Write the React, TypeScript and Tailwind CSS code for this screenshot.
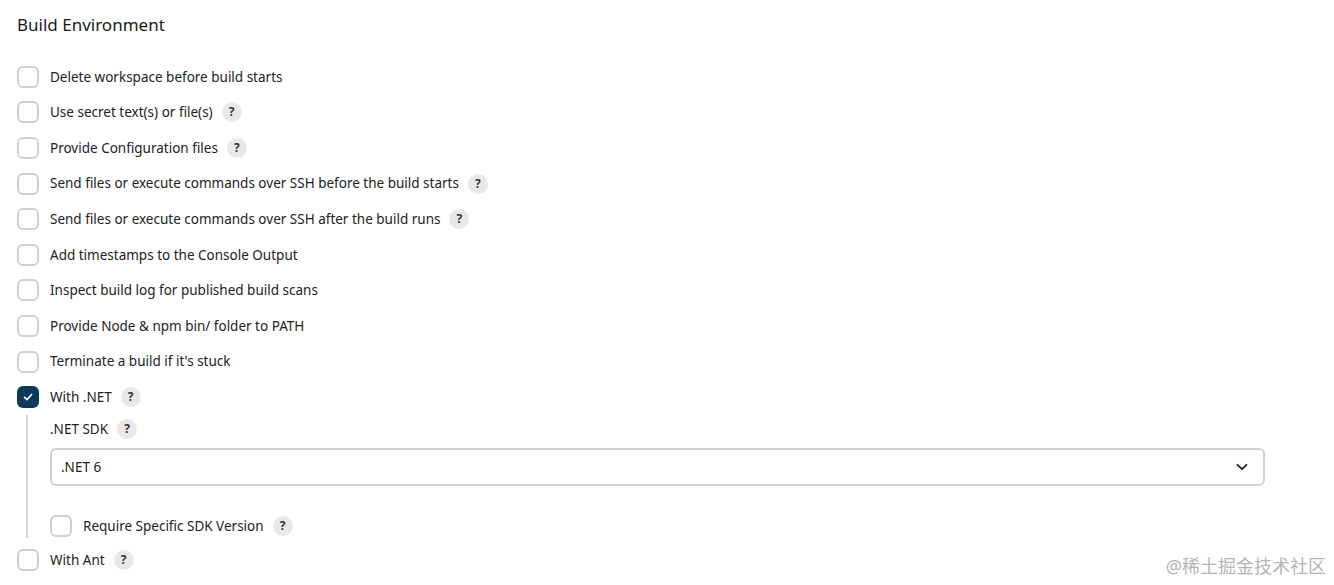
import React from "react";

const Help = () => (
  <span className="ml-[9px] inline-flex h-[20px] w-[20px] items-center justify-center rounded-full bg-[#e8e8e8] text-[12px] font-bold leading-none text-[#333]">
    ?
  </span>
);

const Box = ({ checked = false }: { checked?: boolean }) =>
  checked ? (
    <span className="flex h-[22px] w-[22px] shrink-0 items-center justify-center rounded-[6px] bg-[#0d3a5a]">
      <svg width="12" height="12" viewBox="0 0 12 12" fill="none">
        <path d="M2.5 6.3 L5 8.7 L9.6 3.4" stroke="white" strokeWidth="1.6" strokeLinecap="round" strokeLinejoin="round" />
      </svg>
    </span>
  ) : (
    <span className="h-[22px] w-[22px] shrink-0 rounded-[6px] border-2 border-[#d0d0d0] bg-white" />
  );

const Row = ({ label, help = false, checked = false }: { label: string; help?: boolean; checked?: boolean }) => (
  <div className="flex h-[35.6px] items-center">
    <Box checked={checked} />
    <span className="ml-[11px] text-[13.5px] text-[#222]">{label}</span>
    {help && <Help />}
  </div>
);

export default function App() {
  return (
    <div
      className="relative h-[585px] w-[1334px] overflow-hidden bg-white pl-[17px] text-[#222]"
      style={{ fontFamily: '"Segoe UI", "Noto Sans", "Noto Sans CJK SC", sans-serif' }}
    >
      <h2 className="pt-[13px] text-[17px] leading-[24px] text-[#1a1a1a]">Build Environment</h2>
      <div className="mt-[22px] flex flex-col">
        <Row label="Delete workspace before build starts" />
        <Row label="Use secret text(s) or file(s)" help />
        <Row label="Provide Configuration files" help />
        <Row label="Send files or execute commands over SSH before the build starts" help />
        <Row label="Send files or execute commands over SSH after the build runs" help />
        <Row label="Add timestamps to the Console Output" />
        <Row label="Inspect build log for published build scans" />
        <Row label="Provide Node & npm bin/ folder to PATH" />
        <Row label="Terminate a build if it's stuck" />
        <Row label="With .NET" help checked />
        <div className="ml-[9px] flex border-l-2 border-[#d4d4d4] pl-[22px]">
          <div className="flex w-[1215px] flex-col">
            <div className="flex h-[28px] items-center text-[13.5px]">
              .NET SDK
              <Help />
            </div>
            <div className="mt-[5px] flex h-[38px] items-center justify-between rounded-[6px] border-2 border-[#d0d0d0] pl-[9px] pr-[14px] text-[13.5px]">
              <span>.NET 6</span>
              <svg width="14" height="14" viewBox="0 0 14 14" fill="none">
                <path d="M2.5 4.8 L7 9.2 L11.5 4.8" stroke="#222" strokeWidth="1.8" strokeLinecap="round" strokeLinejoin="round" />
              </svg>
            </div>
            <div className="mt-[28px] flex h-[24px] items-center">
              <Box />
              <span className="ml-[11px] text-[13.5px]">Require Specific SDK Version</span>
              <Help />
            </div>
          </div>
        </div>
        <div className="mt-[4px]">
          <Row label="With Ant" help />
        </div>
      </div>
      <div className="absolute bottom-[5px] right-[8px] text-[18px] text-[#b5b5b5]">@稀土掘金技术社区</div>
    </div>
  );
}
